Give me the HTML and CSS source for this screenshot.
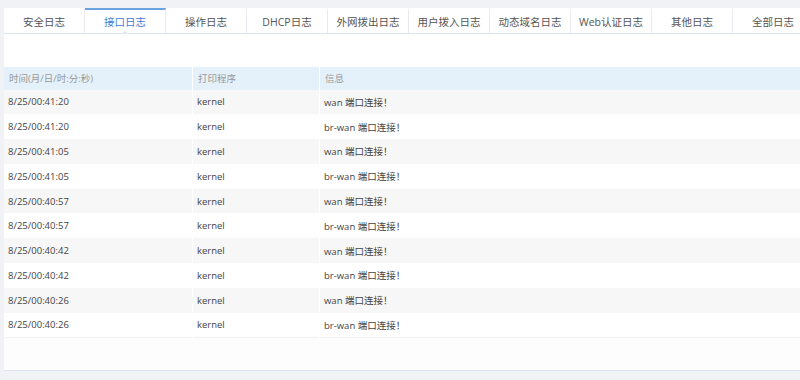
FILE: index.html
```html
<!DOCTYPE html>
<html lang="zh-CN">
<head>
    <meta charset="UTF-8">
    <meta name="viewport" content="width=device-width, initial-scale=1.0">
    <title>系统日志</title>
    <link rel="stylesheet" href="styles.css">
</head>
<body>
    <div class="panel">
        <!-- Tabs -->
        <ul class="tabs">
            <li>安全日志</li>
            <li class="active">接口日志</li>
            <li>操作日志</li>
            <li>DHCP日志</li>
            <li>外网拨出日志</li>
            <li>用户拨入日志</li>
            <li>动态域名日志</li>
            <li>Web认证日志</li>
            <li>其他日志</li>
            <li>全部日志</li>
        </ul>

        <div class="toolbar"></div>

        <!-- Log Table -->
        <table class="log-table">
            <thead>
                <tr>
                    <th class="col-time">时间(月/日/时:分:秒)</th>
                    <th class="col-prog">打印程序</th>
                    <th>信息</th>
                </tr>
            </thead>
            <tbody>
                <tr><td>8/25/00:41:20</td><td>kernel</td><td>wan 端口连接！</td></tr>
                <tr><td>8/25/00:41:20</td><td>kernel</td><td>br-wan 端口连接！</td></tr>
                <tr><td>8/25/00:41:05</td><td>kernel</td><td>wan 端口连接！</td></tr>
                <tr><td>8/25/00:41:05</td><td>kernel</td><td>br-wan 端口连接！</td></tr>
                <tr><td>8/25/00:40:57</td><td>kernel</td><td>wan 端口连接！</td></tr>
                <tr><td>8/25/00:40:57</td><td>kernel</td><td>br-wan 端口连接！</td></tr>
                <tr><td>8/25/00:40:42</td><td>kernel</td><td>wan 端口连接！</td></tr>
                <tr><td>8/25/00:40:42</td><td>kernel</td><td>br-wan 端口连接！</td></tr>
                <tr><td>8/25/00:40:26</td><td>kernel</td><td>wan 端口连接！</td></tr>
                <tr><td>8/25/00:40:26</td><td>kernel</td><td>br-wan 端口连接！</td></tr>
            </tbody>
        </table>

        <div class="table-foot"></div>
    </div>
</body>
</html>
```

FILE: styles.css
```css
body {
    margin: 0;
    padding: 8px 0 0 4px;
    background: #f1f2f6;
    font-family: "Open Sans", "Noto Sans CJK SC", sans-serif;
    overflow: hidden;
}

.panel {
    width: 820px;
    background: #fdfdfd;
    border-bottom: 1px solid #dde5f1;
}

/* Tabs */
.tabs {
    display: flex;
    margin: 0;
    padding: 0;
    list-style: none;
    background: #fff;
    border-bottom: 1px solid #dce4f2;
}

.tabs li {
    position: relative;
    flex: 0 0 81px;
    height: 25px;
    line-height: 25px;
    text-align: center;
    font-size: 10.5px;
    color: #555;
    border-right: 1px solid #e9ebf0;
    border-top: 2px solid transparent;
    box-sizing: border-box;
}

.tabs li.active {
    color: #3f7bd6;
    border-top-color: #6aa3e0;
}

/* little notch under the active tab */
.tabs li.active::after {
    content: "";
    position: absolute;
    left: 50%;
    bottom: -1px;
    margin-left: -4px;
    border: 4px solid transparent;
    border-bottom: 3px solid #e3e8f1;
    border-top: 0;
}

.toolbar {
    height: 33px;
    background: #fff;
}

/* Table */
.log-table {
    width: 100%;
    border-collapse: collapse;
    font-size: 9.5px;
}

.log-table th {
    height: 22.5px;
    padding: 0 5px;
    text-align: left;
    font-weight: normal;
    color: #999;
    background: #e5f1fa;
    border-right: 1px solid #fff;
}

.log-table .col-time {
    width: 178px;
}

.log-table .col-prog {
    width: 116px;
}

.log-table td {
    height: 24.8px;
    padding: 0 4px;
    color: #444;
    border-right: 1px solid #fff;
    box-sizing: border-box;
}

.log-table tbody tr:nth-child(odd) {
    background: #f7f7f7;
}

.log-table tbody tr:nth-child(even) {
    background: #fff;
}

.log-table tbody tr:last-child {
    border-bottom: 1px solid #f1f1f1;
}

.table-foot {
    height: 32px;
}
```
